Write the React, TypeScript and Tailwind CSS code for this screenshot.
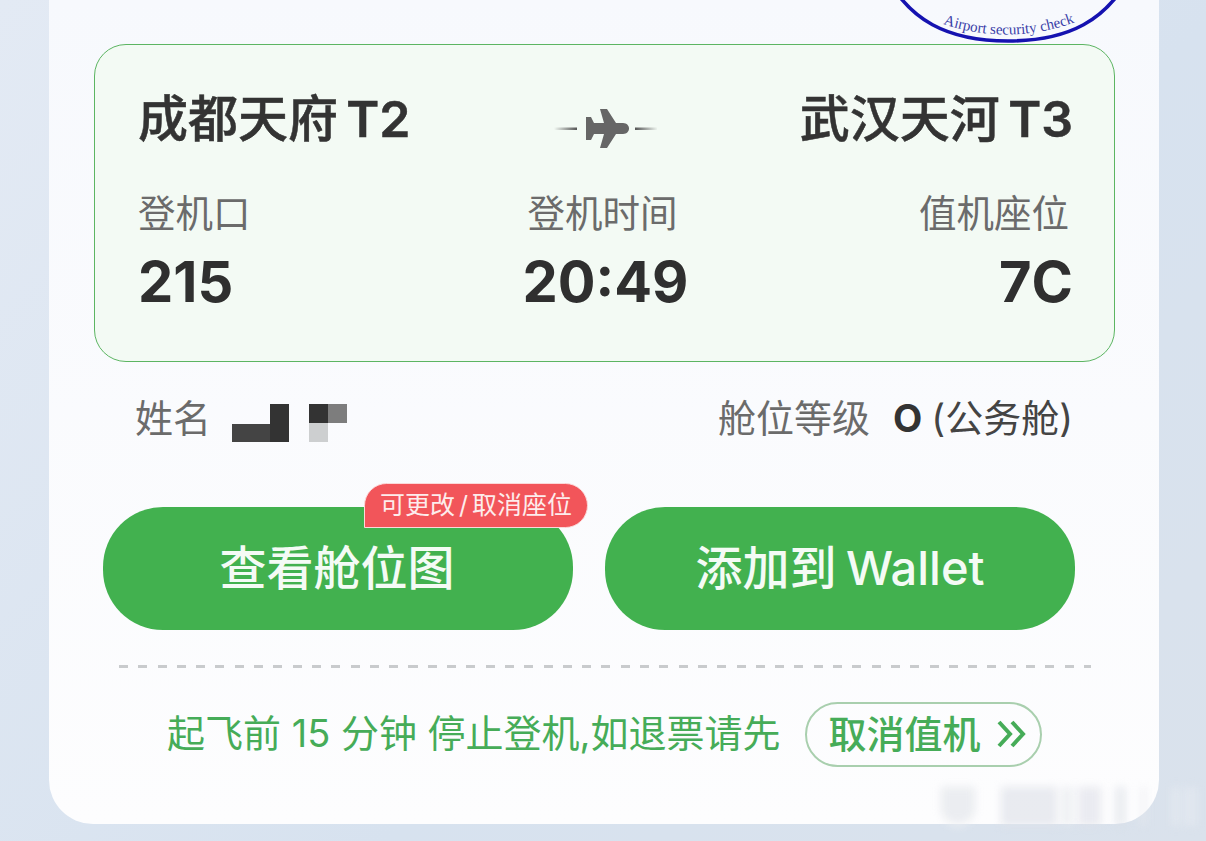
const sans = "font-['Inter','Noto_Sans_CJK_SC',sans-serif]";

function Stamp() {
  return (
    <svg className="absolute left-[878px] top-0" width="260" height="48" viewBox="0 0 260 48" fill="none">
      <path d="M18 -8 C34 14 62 41 130 41 C198 41 226 14 242 -8" stroke="#1512b0" strokeWidth="3.6" />
      <path id="stampArc" d="M65 24 Q130 46 198 22" />
      <text fill="#3a3fa8" fontSize="15" fontFamily="'Liberation Serif', serif">
        <textPath href="#stampArc">Airport security check</textPath>
      </text>
    </svg>
  );
}

function Plane() {
  return (
    <svg className="mt-[20px]" width="104" height="44" viewBox="0 0 104 44">
      <defs>
        <linearGradient id="lineL" x1="0" x2="1">
          <stop offset="0" stopColor="#555" stopOpacity="0" />
          <stop offset="1" stopColor="#555" />
        </linearGradient>
        <linearGradient id="lineR" x1="0" x2="1">
          <stop offset="0" stopColor="#555" />
          <stop offset="1" stopColor="#555" stopOpacity="0" />
        </linearGradient>
      </defs>
      <rect x="1" y="20.5" width="23" height="2.5" fill="url(#lineL)" />
      <rect x="82" y="20.5" width="23" height="2.5" fill="url(#lineR)" />
      <path
        d="M33 10 L38 10 L41 16 L51 16 L47 2 L54 2 L63 16 L70 16 C74 16 76 19 76 21.5 C76 24 74 27 70 27 L63 27 L54 41 L47 41 L51 27 L41 27 L38 33 L33 33 Z"
        fill="#666"
      />
    </svg>
  );
}

function Stat({ label, value, align, labelClass }: { label: string; value: string; align: string; labelClass?: string }) {
  return (
    <div className={`flex flex-col ${align}`}>
      <span className={`text-[37.5px] leading-[44px] text-[#6b6b6b] ${labelClass ?? ''}`}>{label}</span>
      <span className="mt-[12px] text-[56px] leading-[68px] font-bold text-[#2f2f2f]">{value}</span>
    </div>
  );
}

function Watermark() {
  return (
    <div className="absolute left-[941px] top-[787px] flex h-[39px] w-[256px] items-stretch gap-[5px] blur-[4px]">
      <div className="w-[38px] rounded-b-full border-b-2 border-white bg-[#dfe2e8]/60" />
      <div className="w-[18px]" />
      <div className="w-[62px] bg-[#dfe2e9]/70" />
      <div className="w-[12px] bg-[#e4e7ed]/60" />
      <div className="w-[26px] bg-[#dde0e7]/60" />
      <div className="w-[6px]" />
      <div className="w-[10px] bg-[#d9dde5]/60" />
      <div className="w-[6px]" />
      <div className="w-[6px] bg-[#e9ebf0]/60" />
      <div className="w-[18px]" />
      <div className="w-[8px] bg-[#eef1f5]/50" />
      <div className="w-[14px] bg-[#eef1f5]/40" />
    </div>
  );
}

export default function App() {
  return (
    <div className={`relative h-[841px] w-[1206px] overflow-hidden bg-[linear-gradient(135deg,#e3eaf4,#d7e2ef_60%,#dae2ec)] ${sans}`}>
      <div className="ml-[49px] flex h-[824px] w-[1110px] flex-col rounded-b-[44px] bg-[linear-gradient(180deg,#f7f9fd,#fdfdfe)] px-[45px] pt-[44px]">
        <div className="flex h-[318px] w-[1021px] flex-col rounded-[32px] border-[1.5px] border-[#5cb562] bg-[#f3faf4] pl-[43px] pr-[41px] pt-[44px]">
          <div className="flex h-[60px] items-center justify-between text-[50px] font-medium text-[#333333] [word-spacing:-5px] [-webkit-text-stroke:0.5px_#333333]">
            <span>成都天府 <span className="font-semibold">T2</span></span>
            <Plane />
            <span>武汉天河 <span className="font-semibold">T3</span></span>
          </div>
          <div className="mt-[43px] grid grid-cols-3">
            <Stat label="登机口" value="215" align="items-start" />
            <Stat label="登机时间" value="20:49" align="items-center" labelClass="mr-[6px]" />
            <Stat label="值机座位" value="7C" align="items-end" labelClass="mr-[4px]" />
          </div>
        </div>

        <div className="mt-[32px] flex h-[48px] items-center justify-between pl-[41px] pr-[41px] text-[38px] text-[#6b6b6b]">
          <div className="flex items-center">
            <span>姓名</span>
            <div className="ml-[21px] mt-[10px] flex h-[38px] w-[57px] items-end">
              <div className="h-[18px] w-[38px] bg-[#444444]" />
              <div className="h-[38px] w-[19px] bg-[#333333]" />
            </div>
            <div className="ml-[20px] mt-[10px] grid h-[38px] w-[38px] grid-cols-2 grid-rows-2">
              <div className="bg-[#333333]" />
              <div className="bg-[#7d7d7d]" />
              <div className="bg-[#cdcfd0]" />
            </div>
          </div>
          <div className="flex items-center [word-spacing:-4px]">
            <span>舱位等级</span>
            <span className="ml-[23px] font-bold text-[#333333]">O</span>
            <span className="ml-[9px] text-[#444444]">(公务舱)</span>
          </div>
        </div>

        <div className="mt-[65px] flex gap-[32px] pl-[9px]">
          <button className="relative h-[123px] w-[470px] rounded-[60px] bg-[#42b14f] pr-[2px] text-[47px] font-medium text-[#f4fbf5]">
            查看舱位图
            <span className="absolute left-[261px] top-[-24px] flex h-[45px] w-[224px] items-center justify-center rounded-t-[23px] rounded-br-[23px] border border-[#fbd9d9] bg-[#f2555a] text-[25px] font-normal text-[#fdecec]">
              可更改<span className="mx-[4px]">/</span>取消座位
            </span>
          </button>
          <button className="h-[123px] w-[470px] rounded-[60px] bg-[#42b14f] text-[47px] font-medium text-[#f4fbf5] [word-spacing:-3px]">
            添加到 Wallet
          </button>
        </div>

        <div className="ml-[25px] mt-[35px] h-[3px] w-[972px] bg-[repeating-linear-gradient(90deg,#c9cbcd_0_9px,transparent_9px_19.3px)]" />

        <div className="mt-[32px] flex h-[68px] items-center pl-[73px] text-[38px] text-[#46ac58]">
          <span className="mb-[2px]">起飞前 15 分钟 停止登机,如退票请先</span>
          <div className="ml-[24px] flex h-[65px] w-[237px] items-center justify-center gap-[15px] rounded-full border-2 border-[#a9cfae] pl-[8px] font-medium">
            <span>取消值机</span>
            <svg width="30" height="30" viewBox="0 0 30 30" fill="none" stroke="#46ac58" strokeWidth="4">
              <path d="M3 3 L14 15 L3 27" />
              <path d="M16 3 L27 15 L16 27" />
            </svg>
          </div>
        </div>
      </div>
      <Stamp />
      <Watermark />
    </div>
  );
}
